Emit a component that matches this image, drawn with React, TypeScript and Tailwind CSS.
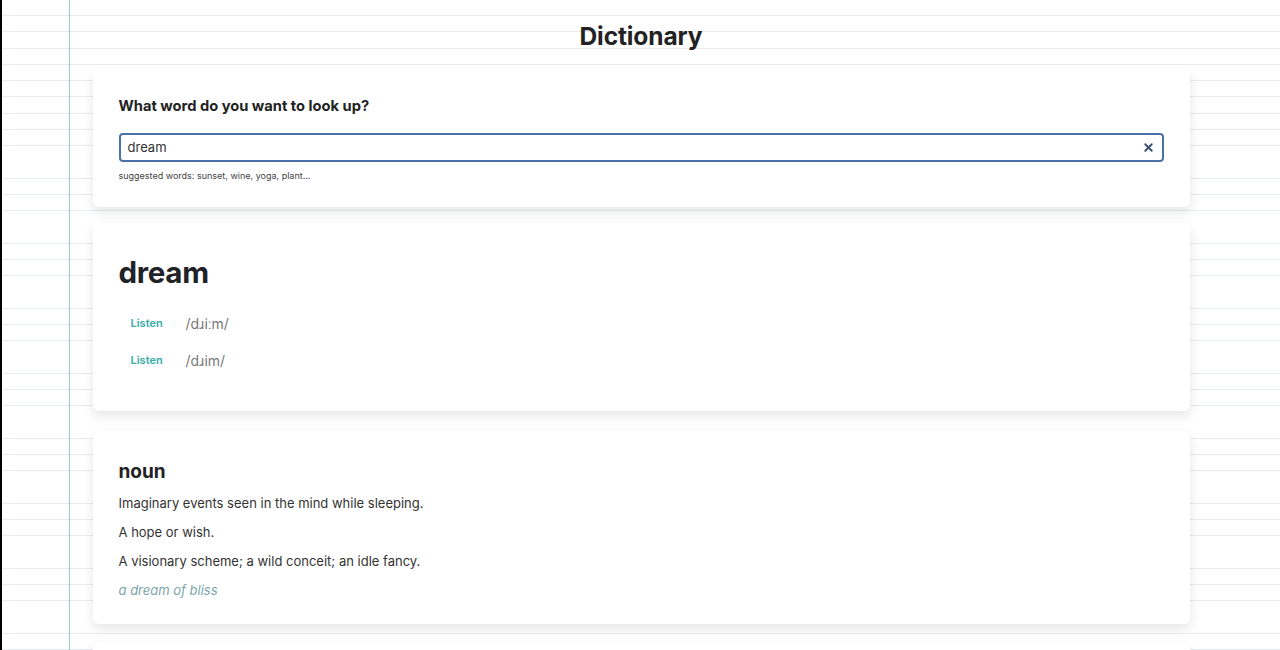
import { X } from "lucide-react";

const definitions = [
  "Imaginary events seen in the mind while sleeping.",
  "A hope or wish.",
  "A visionary scheme; a wild conceit; an idle fancy.",
];

const phonetics = ["/dɹiːm/", "/dɹim/"];

export default function App() {
  return (
    <div
      className="relative h-[650px] overflow-hidden border-l-2 border-black bg-white bg-[repeating-linear-gradient(to_bottom,transparent_0,transparent_15.25px,#e6ecef_15.25px,#e6ecef_16.25px)] text-[#222] [font-family:Inter,'Noto_Sans',sans-serif]"
    >
      {/* notebook margin line */}
      <div className="absolute inset-y-0 left-[67px] w-px bg-[#94cccc]" />

      <div className="relative mx-auto w-[1097px]">
        <h1 className="pt-[20px] pb-[17px] text-center text-[24.5px] font-bold leading-[32px] tracking-[-0.1px]">
          Dictionary
        </h1>

        {/* search */}
        <section className="rounded-md bg-white px-[26px] pt-[28px] pb-[25px] shadow-[0_5px_12px_rgba(0,0,0,0.1)]">
          <h2 className="text-[14.7px] font-bold leading-[18px]">What word do you want to look up?</h2>
          <div className="mt-[18px] flex h-[29px] items-center rounded-[4px] border-2 border-[#4a72a8] px-[7px]">
            <span className="flex-1 text-[13px] text-[#333]">dream</span>
            <X className="h-[13px] w-[13px] text-[#3c5070]" strokeWidth={3.5} />
          </div>
          <p className="mt-[8px] text-[9px] leading-[12px] text-[#444]">suggested words: sunset, wine, yoga, plant...</p>
        </section>

        {/* word header */}
        <section className="mt-[16px] rounded-md bg-white px-[26px] pt-[31px] pb-[40px] shadow-[0_5px_12px_rgba(0,0,0,0.1)]">
          <h2 className="text-[29.5px] font-bold leading-[36px] tracking-[-0.3px] text-[#1f2328]">dream</h2>
          <div className="mt-[23px] flex flex-col gap-[16px]">
            {phonetics.map((p) => (
              <div key={p} className="flex items-center pl-[12px] leading-[21px]">
                <span className="w-[55px] text-[11px] font-semibold text-[#35aba6]">Listen</span>
                <span className="text-[14px] text-[#777]">{p}</span>
              </div>
            ))}
          </div>
        </section>

        {/* meaning */}
        <section className="mt-[19px] rounded-md bg-white px-[26px] pt-[31px] pb-[25px] shadow-[0_5px_12px_rgba(0,0,0,0.1)]">
          <h3 className="text-[19px] font-bold leading-[22px]">noun</h3>
          <div className="mt-[12px] flex flex-col gap-[12px] text-[13px] leading-[17px] text-[#333]">
            {definitions.map((d) => (
              <p key={d}>{d}</p>
            ))}
            <p className="italic text-[#7aa5a8]">a dream of bliss</p>
          </div>
        </section>

        <section className="mt-[18px] h-[120px] rounded-md bg-white shadow-[0_5px_12px_rgba(0,0,0,0.1)]" />
      </div>
    </div>
  );
}
